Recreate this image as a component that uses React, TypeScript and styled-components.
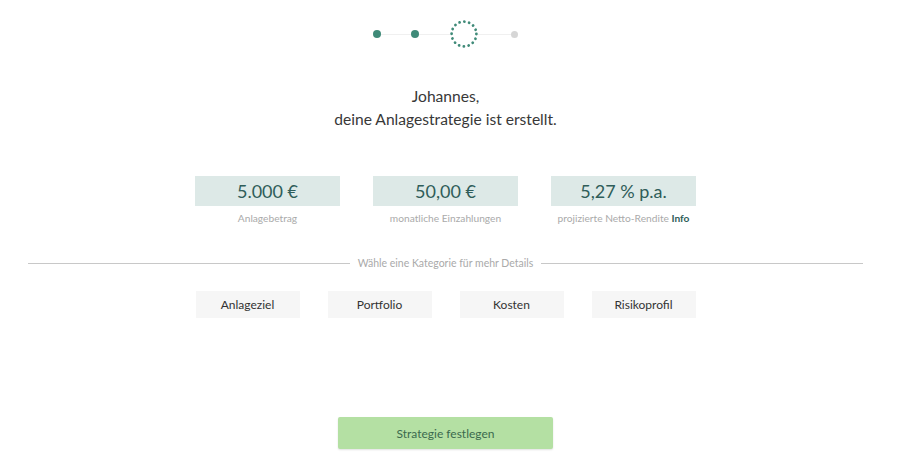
import React from "react";
import styled, { createGlobalStyle } from "styled-components";

const Global = createGlobalStyle`
  html, body { margin: 0; padding: 0; background: #ffffff; }
  body { font-family: Lato, "Open Sans", sans-serif; color: #333; }
  * { box-sizing: border-box; }
`;

const Page = styled.div`
  width: 891px;
  height: 464px;
  display: flex;
  flex-direction: column;
  align-items: center;
  padding-top: 20px;
`;

const Stepper = styled.div`
  display: flex;
  align-items: center;
  height: 28px;
`;

const Dot = styled.span<{ $done?: boolean }>`
  width: ${(p) => (p.$done ? 8 : 7)}px;
  height: ${(p) => (p.$done ? 8 : 7)}px;
  border-radius: 50%;
  background: ${(p) => (p.$done ? "#3f8a78" : "#d6d6d6")};
  flex: none;
`;

const Connector = styled.span<{ $w: number }>`
  width: ${(p) => p.$w}px;
  height: 1px;
  background: #f0f0f0;
  flex: none;
`;

const CurrentRing = styled.svg`
  width: 28px;
  height: 28px;
  flex: none;
  display: block;
`;

const Heading = styled.h1`
  margin: 37px 0 0;
  font-size: 15.6px;
  font-weight: 400;
  line-height: 23px;
  text-align: center;
  color: #383838;
`;

const Stats = styled.div`
  margin-top: 45px;
  display: flex;
  gap: 33px;
`;

const Stat = styled.div`
  display: flex;
  flex-direction: column;
  align-items: center;
  width: 145px;
`;

const StatValue = styled.div`
  width: 145px;
  height: 30px;
  background: #dde9e7;
  color: #2f5d59;
  font-size: 18px;
  display: flex;
  align-items: center;
  justify-content: center;
`;

const StatLabel = styled.div`
  margin-top: 6px;
  font-size: 10.2px;
  color: #aaaaaa;
  white-space: nowrap;
`;

const InfoLink = styled.span`
  color: #2f5d59;
  font-weight: 700;
`;

const Divider = styled.div`
  margin-top: 33px;
  width: 835px;
  display: flex;
  align-items: center;
  gap: 8px;
  &::before, &::after {
    content: "";
    flex: 1;
    height: 1px;
    background: #c8c8c8;
  }
`;

const DividerText = styled.span`
  font-size: 10.5px;
  color: #aaaaaa;
`;

const Categories = styled.div`
  margin-top: 22px;
  display: flex;
  gap: 28px;
`;

const Category = styled.button`
  width: 104px;
  height: 27px;
  border: none;
  background: #f6f6f6;
  font-family: Lato, sans-serif;
  font-size: 12px;
  color: #333;
  padding: 0;
  cursor: pointer;
`;

const Submit = styled.button`
  margin-top: 99px;
  width: 215px;
  height: 32px;
  border: none;
  border-radius: 2px;
  background: #b4e0a3;
  box-shadow: 0 1px 2px rgba(0, 0, 0, 0.12);
  color: #3b6a4e;
  font-family: Lato, sans-serif;
  font-size: 12px;
  cursor: pointer;
`;

export default function App() {
  return (
    <>
      <Global />
      <Page>
        <Stepper>
          <Dot $done />
          <Connector $w={30} />
          <Dot $done />
          <Connector $w={31} />
          <CurrentRing viewBox="0 0 28 28">
            <circle
              cx="14"
              cy="14"
              r="12.4"
              fill="none"
              stroke="#3f8a78"
              strokeWidth="2.8"
              strokeDasharray="0.01 4.86"
              strokeLinecap="round"
            />
          </CurrentRing>
          <Connector $w={33} />
          <Dot />
        </Stepper>
        <Heading>
          Johannes,
          <br />
          deine Anlagestrategie ist erstellt.
        </Heading>
        <Stats>
          <Stat>
            <StatValue>5.000 €</StatValue>
            <StatLabel>Anlagebetrag</StatLabel>
          </Stat>
          <Stat>
            <StatValue>50,00 €</StatValue>
            <StatLabel>monatliche Einzahlungen</StatLabel>
          </Stat>
          <Stat>
            <StatValue>5,27 % p.a.</StatValue>
            <StatLabel>
              projizierte Netto-Rendite <InfoLink>Info</InfoLink>
            </StatLabel>
          </Stat>
        </Stats>
        <Divider>
          <DividerText>Wähle eine Kategorie für mehr Details</DividerText>
        </Divider>
        <Categories>
          <Category>Anlageziel</Category>
          <Category>Portfolio</Category>
          <Category>Kosten</Category>
          <Category>Risikoprofil</Category>
        </Categories>
        <Submit>Strategie festlegen</Submit>
      </Page>
    </>
  );
}
